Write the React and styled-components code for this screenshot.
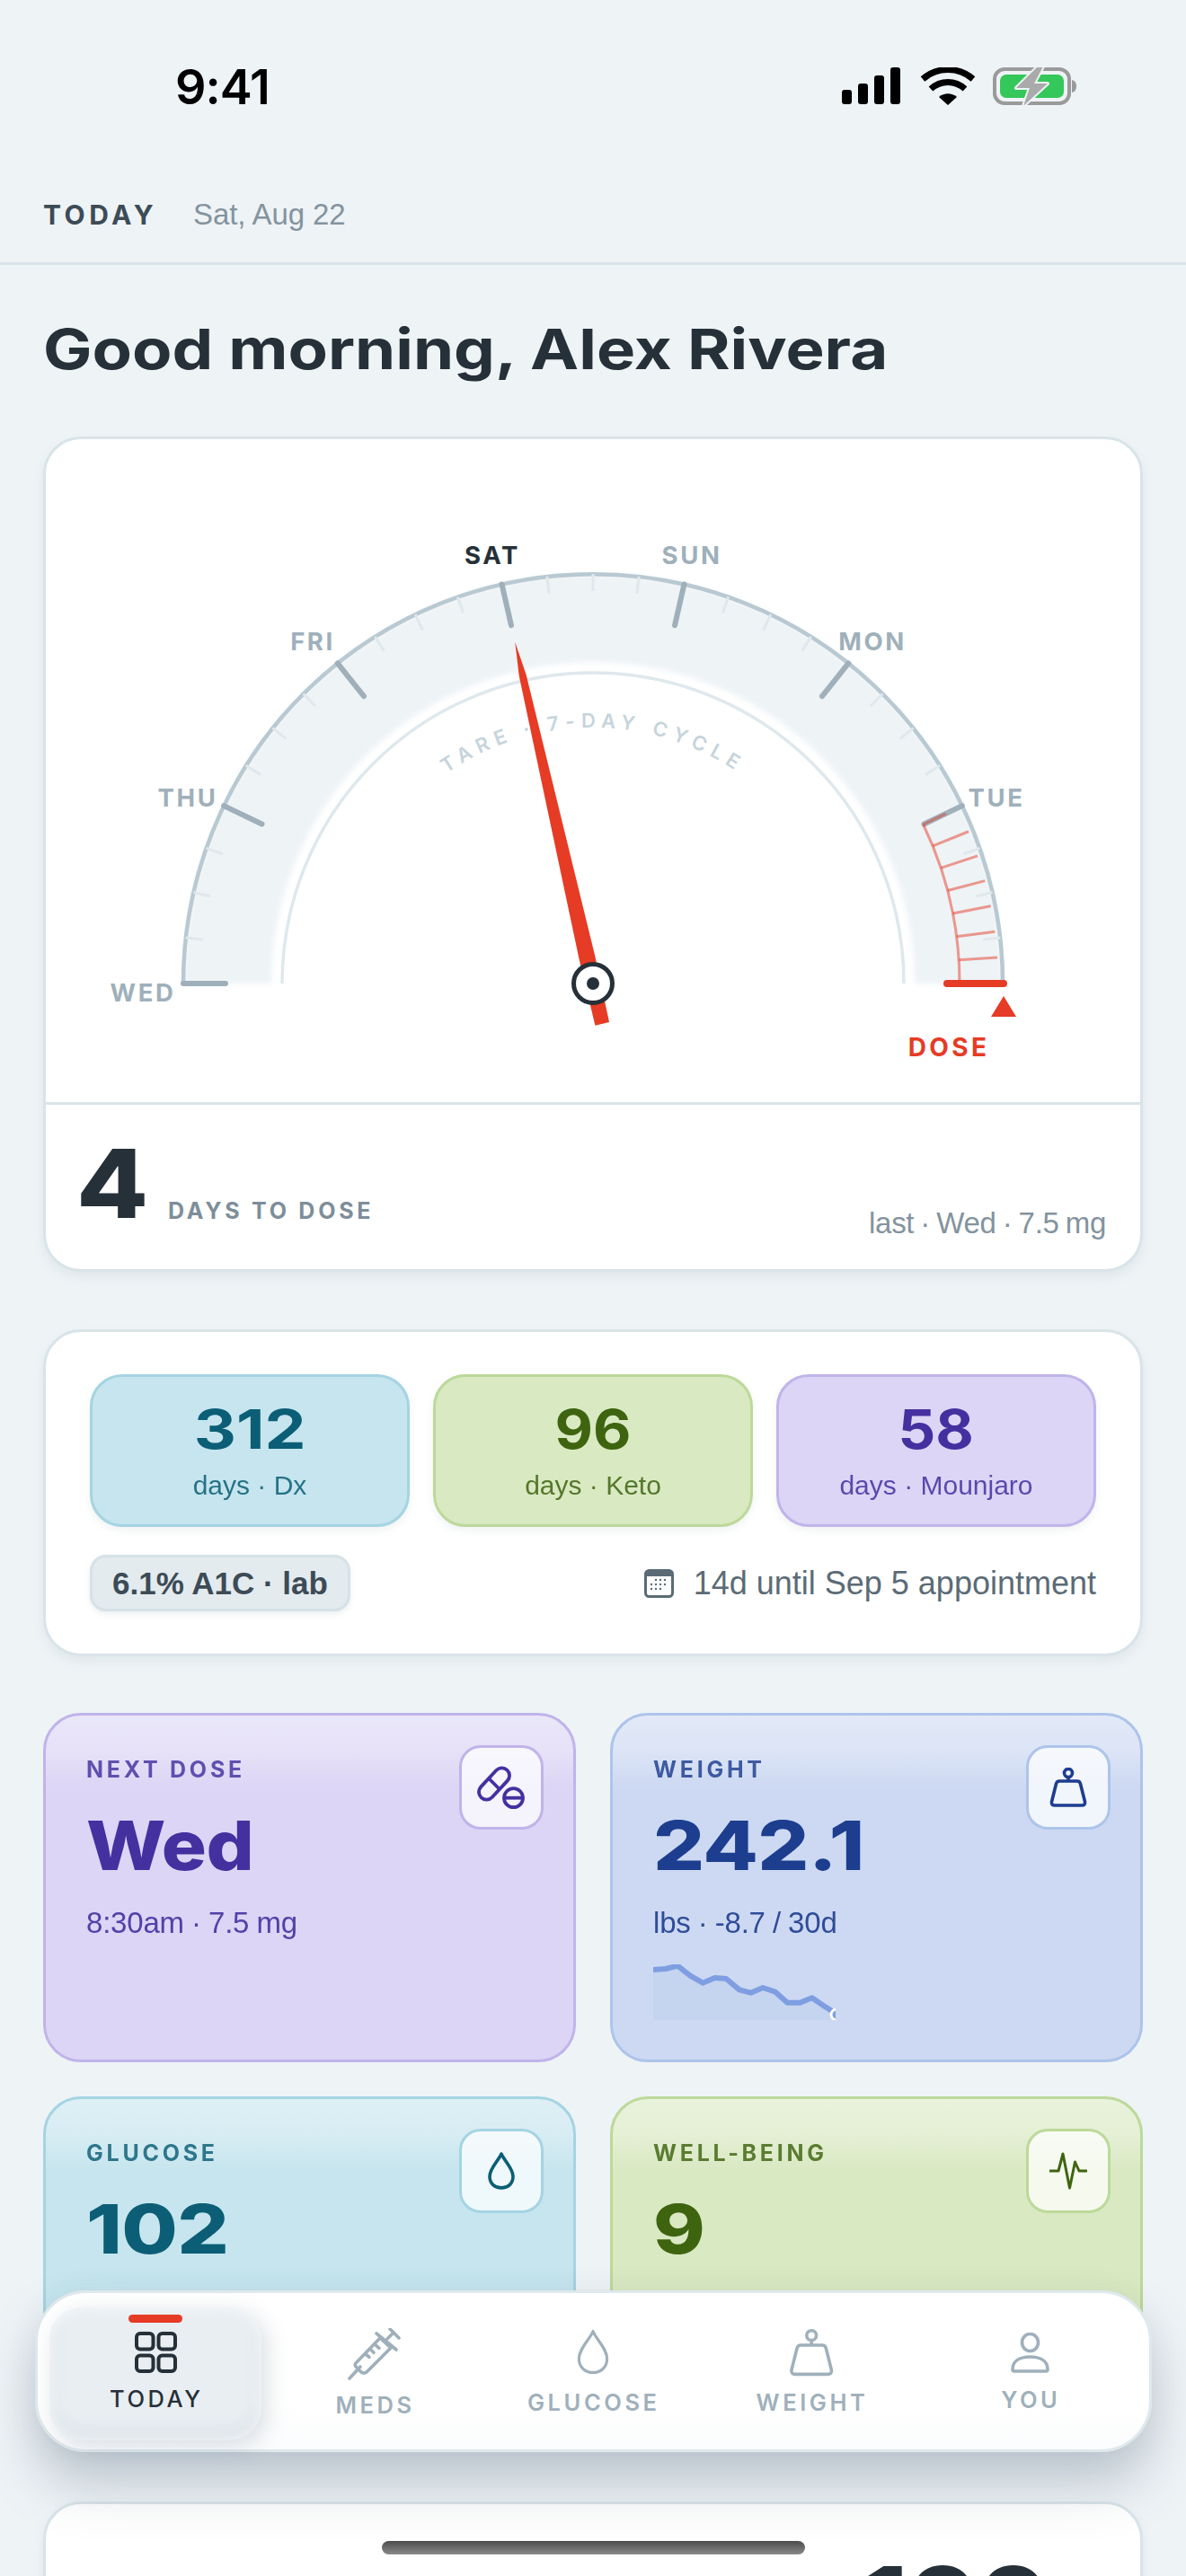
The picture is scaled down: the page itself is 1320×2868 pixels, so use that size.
import styled, { createGlobalStyle } from 'styled-components';

const Global = createGlobalStyle`
  html, body { margin: 0; padding: 0; background: #eef3f6; }
  * { box-sizing: border-box; }
`;

const SANS = '"Liberation Sans", Arial, sans-serif';
const DISPLAY = 'Inter, "Liberation Sans", sans-serif';

const RED = '#e63b25';
const INK = '#263038';
const MUTED = '#9fb0bb';

const Screen = styled.div`
  position: relative;
  width: 1320px;
  height: 2868px;
  overflow: hidden;
  background: #eef3f6;
  font-family: ${SANS};
  color: ${INK};
`;

const StatusBar = styled.div`
  height: 196px;
  padding: 75px 122px 0 195px;
  display: flex;
  justify-content: space-between;
  align-items: flex-start;
`;

const Clock = styled.span`
  font-family: ${DISPLAY};
  font-weight: 600;
  font-size: 54px;
  line-height: 44px;
  letter-spacing: -1px;
  color: #000;
`;

const StatusIcons = styled.svg`
  display: block;
`;

const TopBar = styled.div`
  height: 99px;
  padding: 25px 48px 0;
  display: flex;
  align-items: baseline;
  gap: 40px;
  border-bottom: 3px solid #d9e4e9;
`;

const TopTitle = styled.span`
  font-family: ${DISPLAY};
  font-weight: 700;
  font-size: 30px;
  line-height: 36px;
  letter-spacing: 0.15em;
  color: #3d4b56;
`;

const TopDate = styled.span`
  font-size: 33px;
  line-height: 36px;
  letter-spacing: -0.1px;
  color: #84939e;
`;

const Main = styled.div`
  padding: 0 48px;
  display: flex;
  flex-direction: column;
`;

const Greeting = styled.h1`
  margin: 0;
  height: 191px;
  padding: 54px 0 0;
  font-family: ${DISPLAY};
  font-weight: 700;
  font-size: 62px;
  line-height: 80px;
  color: ${INK};
  white-space: nowrap;
  transform: scaleX(1.17);
  transform-origin: left center;
`;

const Card = styled.section`
  background: #fff;
  border: 3px solid #d9e4e9;
  border-radius: 42px;
  box-shadow: 0 6px 12px rgba(120, 145, 160, 0.12);
  overflow: hidden;
`;

const GaugeCard = styled(Card)`
  height: 930px;
  display: flex;
  flex-direction: column;
`;

const GaugeSvg = styled.svg`
  display: block;
  flex: none;
`;

const GaugeFooter = styled.div`
  flex: 1;
  border-top: 3px solid #d9e4e9;
  padding: 0 38px 0 34px;
  display: flex;
  align-items: flex-end;
`;

const BigCount = styled.span`
  font-family: ${DISPLAY};
  font-weight: 800;
  font-size: 106px;
  line-height: 106px;
  margin-bottom: 42px;
  color: ${INK};
  transform: scaleX(1.1);
  transform-origin: left center;
`;

const CountLabel = styled.span`
  font-family: ${DISPLAY};
  font-weight: 700;
  font-size: 25px;
  line-height: 30px;
  letter-spacing: 0.15em;
  color: #7d8e9a;
  margin: 0 0 50px 29px;
`;

const LastDose = styled.span`
  margin: 0 0 31px auto;
  font-size: 33px;
  line-height: 40px;
  letter-spacing: -0.3px;
  word-spacing: -1.7px;
  color: #84939e;
`;

const StatsCard = styled(Card)`
  margin-top: 64px;
  height: 364px;
  padding: 47px 49px 0;
`;

const StatRow = styled.div`
  display: grid;
  grid-template-columns: repeat(3, 1fr);
  gap: 26px;
`;

const StatBox = styled.div`
  height: 170px;
  border-radius: 36px;
  border: 3px solid ${p => p.$line};
  background: ${p => p.$bg};
  color: ${p => p.$ink};
  box-shadow: 0 4px 8px rgba(120, 145, 160, 0.12);
  display: flex;
  flex-direction: column;
  align-items: center;
`;

const StatValue = styled.span`
  margin-top: 23px;
  font-family: ${DISPLAY};
  font-weight: 700;
  font-size: 60px;
  line-height: 70px;
  transform: scaleX(${p => p.$stretch});
`;

const StatLabel = styled.span`
  margin-top: 10px;
  font-size: 30px;
  line-height: 36px;
  opacity: 0.85;
`;

const MetaRow = styled.div`
  margin-top: 31px;
  display: flex;
  align-items: center;
  justify-content: space-between;
`;

const LabPill = styled.span`
  height: 63px;
  padding: 0 22px;
  display: flex;
  align-items: center;
  background: #e3ebef;
  border: 3px solid #d6e2e7;
  border-radius: 18px;
  box-shadow: 0 3px 6px rgba(120, 145, 160, 0.15);
  font-weight: 700;
  font-size: 35px;
  color: #3d4b56;
`;

const Appointment = styled.span`
  display: flex;
  align-items: center;
  gap: 22px;
  font-size: 36px;
  color: #5b6b76;
`;

const TileGrid = styled.div`
  margin-top: 63px;
  display: grid;
  grid-template-columns: repeat(2, 1fr);
  grid-auto-rows: 389px;
  gap: 38px;
`;

const Tile = styled.div`
  position: relative;
  border-radius: 42px;
  border: 3px solid ${p => p.$line};
  background: linear-gradient(180deg, rgba(255, 255, 255, 0.42) 0, rgba(255, 255, 255, 0.3) 40px, rgba(255, 255, 255, 0) 80px), ${p => p.$bg};
  color: ${p => p.$ink};
  padding: 45px 33px 0 45px;
`;

const TileHead = styled.div`
  display: flex;
  justify-content: space-between;
  align-items: flex-start;
  height: 0;
`;

const TileLabel = styled.span`
  font-family: ${DISPLAY};
  font-weight: 700;
  font-size: 25px;
  line-height: 30px;
  letter-spacing: 0.15em;
  opacity: 0.82;
`;

const IconBox = styled.span`
  width: 94px;
  height: 94px;
  margin-top: -12px;
  flex: none;
  border-radius: 24px;
  border: 3px solid ${p => p.$line};
  background: rgba(255, 255, 255, 0.72);
  display: flex;
  align-items: center;
  justify-content: center;
`;

const TileValue = styled.div`
  margin-top: 54px;
  font-family: ${DISPLAY};
  font-weight: 800;
  font-size: 76px;
  line-height: 90px;
  letter-spacing: -0.5px;
  transform: scaleX(${p => p.$stretch});
  transform-origin: left center;
`;

const TileSub = styled.div`
  margin-top: 22px;
  font-size: 33px;
  line-height: 40px;
  letter-spacing: -0.2px;
  word-spacing: -0.8px;
  opacity: 0.9;
`;

const Spark = styled.svg`
  display: block;
  margin-top: 26px;
`;

const TrendCard = styled(Card)`
  margin-top: 62px;
  height: 300px;
  padding: 48px 102px 0 0;
  text-align: right;
`;

const TrendValue = styled.div`
  font-family: ${DISPLAY};
  font-weight: 800;
  font-size: 106px;
  line-height: 120px;
  color: ${INK};
  transform: scaleX(1.07);
  transform-origin: right center;
`;

const Nav = styled.nav`
  position: absolute;
  left: 39px;
  top: 2550px;
  width: 1243px;
  height: 180px;
  padding: 16px 0 10px 13px;
  display: grid;
  grid-template-columns: repeat(5, 236px);
  gap: 7.25px;
  background: linear-gradient(180deg, #fff 0, #fff 70%, #fbfcfd 100%);
  border: 3px solid #dfe8ec;
  border-radius: 57px;
  box-shadow: 0 36px 60px rgba(70, 90, 110, 0.28), 0 6px 36px rgba(70, 90, 110, 0.06);
`;

const NavItem = styled.div`
  display: flex;
  flex-direction: column;
  align-items: center;
  padding-top: ${p => p.$top}px;
  border-radius: 36px;
  color: ${p => (p.$active ? INK : MUTED)};
  background: ${p => (p.$active ? '#e9eef2' : 'transparent')};
  box-shadow: ${p => (p.$active
    ? 'inset 0 0 16px rgba(255, 255, 255, 0.9), inset 0 -10px 18px rgba(180, 195, 205, 0.35), 6px 6px 24px rgba(90, 110, 130, 0.22)'
    : 'none')};
`;

const NavBar = styled.span`
  width: 60px;
  height: 9px;
  border-radius: 5px;
  background: ${RED};
  margin-bottom: 10px;
`;

const NavLabel = styled.span`
  margin-top: ${p => p.$gap}px;
  font-family: ${DISPLAY};
  font-weight: ${p => (p.$active ? 500 : 600)};
  font-size: 25.5px;
  line-height: 26px;
  letter-spacing: 0.14em;
  margin-right: -0.1em;
`;

const HomeBar = styled.div`
  position: absolute;
  left: 425px;
  top: 2829px;
  width: 471px;
  height: 15px;
  border-radius: 8px;
  background: linear-gradient(180deg, #4b4b4b, #8a8a8a);
`;

/* gauge geometry, in page px relative to the card svg */
const CX = 609;
const CY = 606;
const R = 456;

const polar = (r, deg) => {
  const a = (deg * Math.PI) / 180;
  return [CX - r * Math.cos(a), CY - r * Math.sin(a)];
};

const Radial = ({ deg, from, to, ...rest }) => {
  const [x1, y1] = polar(from, deg);
  const [x2, y2] = polar(to, deg);
  return <line x1={x1} y1={y1} x2={x2} y2={y2} {...rest} />;
};

const DAY = 180 / 7;

const dayLabels = [
  { text: 'WED', x: 108, y: 626 },
  { text: 'THU', x: 158, y: 409 },
  { text: 'FRI', x: 297, y: 235 },
  { text: 'SAT', x: 497, y: 139, now: true },
  { text: 'SUN', x: 719, y: 139 },
  { text: 'MON', x: 920, y: 235 },
  { text: 'TUE', x: 1058, y: 409 },
];

const arcPath = r => `M ${CX - r} ${CY} A ${r} ${r} 0 0 1 ${CX + r} ${CY}`;

const Gauge = () => {
  const major = Array.from({ length: 7 }, (_, i) => i * DAY);
  const minor = [];
  for (let d = 0; d < 7; d++) {
    for (let m = 1; m < 4; m++) minor.push((d + m / 4) * DAY);
  }
  const hatch = [1, 2, 3, 4, 5, 6].map(k => 180 - (k * DAY) / 7);
  const needle = 3 * DAY - 90;

  return (
    <GaugeSvg width="1218" height="738" viewBox="0 0 1218 738">
      <defs>
        <filter id="halo" x="-10%" y="-10%" width="120%" height="120%">
          <feGaussianBlur stdDeviation="3" />
        </filter>
        <path id="cycleArc" d={arcPath(285)} />
      </defs>

      <path d={`${arcPath(R)} L ${CX + 358} ${CY} A 358 358 0 0 0 ${CX - 358} ${CY} Z`} fill="#eef3f6" filter="url(#halo)" />
      <path d={arcPath(R)} fill="none" stroke="#b8c9d2" strokeWidth="4.5" />
      <path d={arcPath(346)} fill="none" stroke="#dfe8ec" strokeWidth="3.5" />

      {minor.map(d => (
        <Radial key={d} deg={d} from={456} to={437} stroke="#dfe8ec" strokeWidth="3" />
      ))}
      {major.map(d => (
        <Radial key={d} deg={d} from={456} to={409} stroke={MUTED} strokeWidth="6" strokeLinecap="round" />
      ))}

      <path d={`M ${polar(408, 180 - DAY).join(' ')} A 408 408 0 0 1 ${CX + 408} ${CY}`} fill="none" stroke={RED} strokeOpacity="0.5" strokeWidth="3" />
      <Radial deg={180 - DAY} from={408} to={436} stroke={RED} strokeOpacity="0.45" strokeWidth="3" />
      {hatch.map(d => (
        <Radial key={d} deg={d} from={408} to={451} stroke={RED} strokeOpacity="0.5" strokeWidth="3" />
      ))}
      <line x1={CX + 394} y1={CY} x2={CX + 457} y2={CY} stroke={RED} strokeWidth="8" strokeLinecap="round" />
      <polygon points={`${CX + 457},${CY + 14} ${CX + 443},${CY + 37} ${CX + 471},${CY + 37}`} fill={RED} />

      <text x="1005" y="687" textAnchor="middle" fontFamily={DISPLAY} fontWeight="700" fontSize="28" letterSpacing="3.4" fill={RED}>DOSE</text>

      {dayLabels.map(l => (
        <text key={l.text} x={l.x} y={l.y} textAnchor="middle" fontFamily={DISPLAY} fontWeight="700" fontSize="27.5" letterSpacing="2.6" fill={l.now ? INK : MUTED}>{l.text}</text>
      ))}

      <text fontFamily={DISPLAY} fontWeight="600" fontSize="22" letterSpacing="7" fill="#c6d4dc">
        <textPath href="#cycleArc" startOffset="50%" textAnchor="middle">TARE · 7-DAY CYCLE</textPath>
      </text>

      <g transform={`translate(${CX} ${CY}) rotate(${needle})`}>
        <polygon points="0,-390 4,-352 9,-30 8,46 -8,46 -9,-30 -4,-352" fill={RED} />
      </g>
      <circle cx={CX} cy={CY} r="21.5" fill="#fff" stroke={INK} strokeWidth="5" />
      <circle cx={CX} cy={CY} r="7" fill={INK} />
    </GaugeSvg>
  );
};

const StatusGlyphs = () => (
  <StatusIcons width="261" height="42" viewBox="0 0 261 42">
    <g fill="#000">
      <rect x="0" y="25" width="11" height="16" rx="3" />
      <rect x="18" y="18" width="11" height="23" rx="3" />
      <rect x="36" y="9" width="11" height="32" rx="3" />
      <rect x="54" y="0" width="11" height="41" rx="3" />
    </g>
    <g fill="none" stroke="#000" strokeWidth="7">
      <path d="M90 13 C106 -1 130 -1 146 13" />
      <path d="M99 24 C110 14 126 14 137 24" />
    </g>
    <path d="M108 33 C114 28 122 28 128 33 L118 42 Z" fill="#000" />
    <rect x="170" y="2" width="83" height="38" rx="11" fill="none" stroke="#9a9a9a" strokeWidth="4" />
    <rect x="176" y="8" width="71" height="26" rx="7" fill="#34c759" />
    <path d="M256 14 C260 15 261 18 261 21 C261 24 260 27 256 28 Z" fill="#9a9a9a" />
    <path d="M218 -1 L194 23 L209 23 L202 43 L229 18 L214 18 L224 -1 Z" fill="#aaa" stroke="#eef3f6" strokeWidth="4" strokeLinejoin="round" paintOrder="stroke" />
  </StatusIcons>
);

const calendarDots = [
  [13, 12], [18, 12], [23, 12],
  [8, 17], [13, 17], [18, 17], [23, 17],
  [8, 22], [13, 22], [18, 22],
];

const CalendarIcon = () => (
  <svg width="33" height="32" viewBox="0 0 33 32">
    <rect x="1.5" y="1.5" width="30" height="29" rx="4" fill="none" stroke="#5b6b76" strokeWidth="3" />
    <path d="M1.5 8 V5 a3.5 3.5 0 0 1 3.5 -3.5 H28 a3.5 3.5 0 0 1 3.5 3.5 V8 Z" fill="#5b6b76" />
    {calendarDots.map(([x, y]) => (
      <circle key={`${x}-${y}`} cx={x} cy={y} r="1.2" fill="#5b6b76" />
    ))}
  </svg>
);

const PillIcon = ({ color }) => (
  <svg width="54" height="54" viewBox="0 0 54 54" fill="none" stroke={color} strokeWidth="3.8">
    <rect x="-8.5" y="-21" width="17" height="42" rx="8.5" transform="translate(19 23) rotate(43)" />
    <line x1="13" y1="17" x2="25" y2="29" />
    <circle cx="40.5" cy="38.7" r="10.5" />
    <line x1="30" y1="38.7" x2="51" y2="38.7" />
  </svg>
);

const WeightIcon = ({ color, scale = 1, strokeWidth = 3.6 }) => (
  <svg width={42 * scale} height={44 * scale} viewBox="0 0 42 44" fill="none" stroke={color} strokeWidth={strokeWidth / scale} strokeLinejoin="round">
    <circle cx="21" cy="6" r="4.5" />
    <line x1="21" y1="10.5" x2="21" y2="15" />
    <path d="M11 15 H31 C33 15 34 16 34.5 18 L39.5 38 C40 41 38.5 42 36 42 H6 C3.5 42 2 41 2.5 38 L7.5 18 C8 16 9 15 11 15 Z" />
  </svg>
);

const DropIcon = ({ color, w, h, strokeWidth }) => (
  <svg width={w} height={h} viewBox="0 0 30 40" fill="none" stroke={color} strokeWidth={strokeWidth} strokeLinejoin="round" preserveAspectRatio="none">
    <path d="M15 2 C18 9 28 17 28 26 C28 33.5 22 38 15 38 C8 38 2 33.5 2 26 C2 17 12 9 15 2 Z" />
  </svg>
);

const PulseIcon = ({ color }) => (
  <svg width="42" height="42" viewBox="0 0 42 42" fill="none" stroke={color} strokeWidth="3" strokeLinecap="round" strokeLinejoin="round">
    <polyline points="1,21 10,21 15,2 22.5,40 28.5,11 33,21 41,21" />
  </svg>
);

const GridIcon = ({ color }) => (
  <svg width="47" height="46" viewBox="0 0 47 46" fill="none" stroke={color} strokeWidth="4">
    <rect x="2" y="2" width="18.5" height="17.5" rx="4" />
    <rect x="26.5" y="2" width="18.5" height="17.5" rx="4" />
    <rect x="2" y="26.5" width="18.5" height="17.5" rx="4" />
    <rect x="26.5" y="26.5" width="18.5" height="17.5" rx="4" />
  </svg>
);

const SyringeIcon = ({ color }) => (
  <svg width="59" height="58" viewBox="16 11 59 58" fill="none" stroke={color} strokeWidth="3.6" strokeLinecap="round" strokeLinejoin="round">
    <line x1="18" y1="67" x2="30" y2="54" />
    <path d="M25 50 L52 22 L64 33 L37 60 Q34 62 31 60 L26 55 Q23 52 25 50 Z" />
    <line x1="36" y1="40" x2="40" y2="43.3" />
    <line x1="41.7" y1="35" x2="45" y2="38.3" />
    <line x1="47.3" y1="30" x2="51" y2="33.3" />
    <line x1="48" y1="17" x2="70" y2="35" />
    <line x1="60" y1="23" x2="67" y2="16" />
    <line x1="63" y1="12" x2="73" y2="22" />
  </svg>
);

const PersonIcon = ({ color }) => (
  <svg width="43" height="45" viewBox="0 0 43 45" fill="none" stroke={color} strokeWidth="3.6">
    <ellipse cx="21.5" cy="11" rx="9" ry="9.5" />
    <path d="M2 41 C2 31 11 27 21.5 27 C32 27 41 31 41 41 C41 42.5 40.5 43 39 43 H4 C2.5 43 2 42.5 2 41 Z" />
  </svg>
);

const sparkPts = [
  [157, 938], [190, 935], [222, 925], [255, 958], [288, 982], [320, 965], [350, 968], [385, 1005],
  [415, 1015], [447, 998], [480, 1012], [512, 1048], [545, 1048], [577, 1032], [610, 1060], [635, 1080],
].map(([x, y]) => [(x - 157) / 2.376, (y - 920) / 3]);

const Sparkline = () => {
  const line = sparkPts.map(p => p.join(',')).join(' ');
  return (
    <Spark width="203" height="62" viewBox="0 0 203 62">
      <polygon points={`0,62 ${line} 203,62`} fill="#c5d4ef" />
      <polyline points={line} fill="none" stroke="#7f9ee2" strokeWidth="6" strokeLinejoin="round" />
      <circle cx="204" cy="56" r="6" fill="#7f9ee2" stroke="#fff" strokeWidth="3" />
    </Spark>
  );
};

const stats = [
  { value: '312', stretch: 1.22, label: 'days · Dx', bg: '#c6e5ee', line: '#a5d4e2', ink: '#0b5e75' },
  { value: '96', stretch: 1.09, label: 'days · Keto', bg: '#d9e9c2', line: '#bcd99a', ink: '#3e6410' },
  { value: '58', stretch: 1.09, label: 'days · Mounjaro', bg: '#dcd5f5', line: '#c0b4ea', ink: '#4530a0' },
];

const tiles = [
  { label: 'NEXT DOSE', value: 'Wed', stretch: 1.1, sub: '8:30am · 7.5 mg', bg: '#dcd5f5', line: '#c0b4ea', ink: '#4530a0', icon: <PillIcon color="#4530a0" /> },
  { label: 'WEIGHT', value: '242.1', stretch: 1.18, sub: 'lbs · -8.7 / 30d', bg: '#cdd9f2', line: '#adc4ea', ink: '#1d3d8f', icon: <WeightIcon color="#1d3d8f" />, spark: true },
  { label: 'GLUCOSE', value: '102', stretch: 1.19, bg: '#c6e5ee', line: '#a5d4e2', ink: '#0b5e75', icon: <DropIcon color="#0b5e75" w={30} h={42} strokeWidth={3.6} /> },
  { label: 'WELL-BEING', value: '9', stretch: 1.15, bg: '#d9e9c2', line: '#bcd99a', ink: '#3e6410', icon: <PulseIcon color="#3e6410" /> },
];

const App = () => (
  <Screen>
    <Global />
    <StatusBar>
      <Clock>9:41</Clock>
      <StatusGlyphs />
    </StatusBar>
    <TopBar>
      <TopTitle>TODAY</TopTitle>
      <TopDate>Sat, Aug 22</TopDate>
    </TopBar>
    <Main>
      <Greeting>Good morning, Alex Rivera</Greeting>

      <GaugeCard>
        <Gauge />
        <GaugeFooter>
          <BigCount>4</BigCount>
          <CountLabel>DAYS TO DOSE</CountLabel>
          <LastDose>last · Wed · 7.5 mg</LastDose>
        </GaugeFooter>
      </GaugeCard>

      <StatsCard>
        <StatRow>
          {stats.map(s => (
            <StatBox key={s.label} $bg={s.bg} $line={s.line} $ink={s.ink}>
              <StatValue $stretch={s.stretch}>{s.value}</StatValue>
              <StatLabel>{s.label}</StatLabel>
            </StatBox>
          ))}
        </StatRow>
        <MetaRow>
          <LabPill>6.1% A1C · lab</LabPill>
          <Appointment><CalendarIcon />14d until Sep 5 appointment</Appointment>
        </MetaRow>
      </StatsCard>

      <TileGrid>
        {tiles.map(t => (
          <Tile key={t.label} $bg={t.bg} $line={t.line} $ink={t.ink}>
            <TileHead>
              <TileLabel>{t.label}</TileLabel>
              <IconBox $line={t.line}>{t.icon}</IconBox>
            </TileHead>
            <TileValue $stretch={t.stretch}>{t.value}</TileValue>
            {t.sub && <TileSub>{t.sub}</TileSub>}
            {t.spark && <Sparkline />}
          </Tile>
        ))}
      </TileGrid>

      <TrendCard>
        <TrendValue>100</TrendValue>
      </TrendCard>
    </Main>

    <Nav>
      <NavItem $active $top={8}>
        <NavBar />
        <GridIcon color={INK} />
        <NavLabel $active $gap={16}>TODAY</NavLabel>
      </NavItem>
      <NavItem $top={23}>
        <SyringeIcon color={MUTED} />
        <NavLabel $gap={15}>MEDS</NavLabel>
      </NavItem>
      <NavItem $top={24}>
        <DropIcon color={MUTED} w={36} h={51} strokeWidth={2.6} />
        <NavLabel $gap={18}>GLUCOSE</NavLabel>
      </NavItem>
      <NavItem $top={24}>
        <WeightIcon color={MUTED} scale={1.2} />
        <NavLabel $gap={16}>WEIGHT</NavLabel>
      </NavItem>
      <NavItem $top={28}>
        <PersonIcon color={MUTED} />
        <NavLabel $gap={17}>YOU</NavLabel>
      </NavItem>
    </Nav>
    <HomeBar />
  </Screen>
);

export default App;
